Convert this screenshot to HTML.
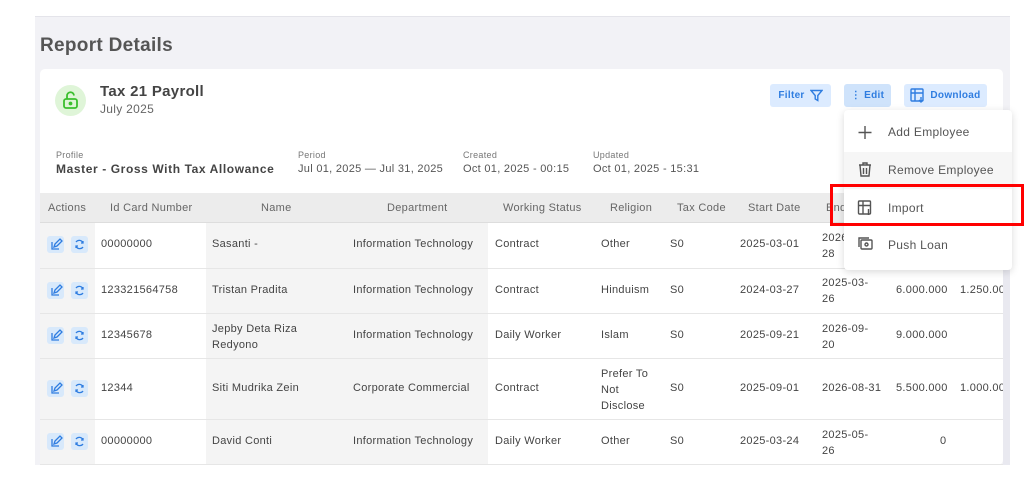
<!DOCTYPE html>
<html><head><meta charset="utf-8"><style>
*{box-sizing:border-box;margin:0;padding:0}
body{width:1035px;height:487px;background:#fff;font-family:"Liberation Sans",sans-serif;color:#444;position:relative;overflow:hidden;letter-spacing:0.3px}
.a{position:absolute;white-space:nowrap}
.bg{left:35px;top:16px;width:975px;height:449px;background:#f2f2f6;border-top:1px solid #e4e4ea}
.card{left:40px;top:69px;width:963px;height:396px;background:#fff;border-radius:5px}
.t{font-size:11px;color:#444}
.h{font-size:11px;color:#666}
.btn{background:#dcebff;border-radius:3px;color:#2f7de0;font-size:10px;font-weight:bold;height:23px;top:84px;display:flex;align-items:center;justify-content:center;gap:5px}
.ib{width:17px;height:17px;background:#d8e9fb;border-radius:3px;position:absolute;left:0;top:0}
.line{position:absolute;left:40px;width:963px;height:1px;background:#e6e6e6}
</style></head><body>
<div class="a bg"></div>
<div class="a" style="left:40px;top:35px;font-size:19px;font-weight:bold;color:#555">Report Details</div>
<div class="a card"></div>
<div class="a" style="left:55px;top:85px;width:31px;height:31px;border-radius:50%;background:#dff5d8"></div>
<svg class="a" style="left:62px;top:91px" width="17" height="19" viewBox="0 0 17 19" fill="none" stroke="#3bbf2e" stroke-width="1.8"><rect x="2" y="8" width="13" height="9" rx="2"/><path d="M5 8V5a3.5 3.5 0 0 1 7-0.5"/><circle cx="8.5" cy="12.5" r="1" fill="#3bbf2e"/></svg>
<div class="a" style="left:100px;top:83px;font-size:15px;font-weight:bold;color:#444">Tax 21 Payroll</div>
<div class="a" style="left:100px;top:102px;font-size:12px;color:#666">July 2025</div>
<div class="a" style="left:56px;top:150px;font-size:9px;color:#777">Profile</div>
<div class="a" style="left:56px;top:162px;font-size:12px;font-weight:bold;color:#444;letter-spacing:0.6px">Master - Gross With Tax Allowance</div>
<div class="a" style="left:298px;top:150px;font-size:9px;color:#777">Period</div>
<div class="a" style="left:298px;top:163px;font-size:11px;color:#555">Jul 01, 2025 — Jul 31, 2025</div>
<div class="a" style="left:463px;top:150px;font-size:9px;color:#777">Created</div>
<div class="a" style="left:463px;top:163px;font-size:11px;color:#555">Oct 01, 2025 - 00:15</div>
<div class="a" style="left:593px;top:150px;font-size:9px;color:#777">Updated</div>
<div class="a" style="left:593px;top:163px;font-size:11px;color:#555">Oct 01, 2025 - 15:31</div>
<div class="a btn" style="left:770px;width:61px">Filter <svg width="13" height="13" viewBox="0 0 13 13" fill="none" stroke="#2f7de0" stroke-width="1.4"><path d="M1 1.5h11L7.8 6.5v5L5.2 10V6.5z"/></svg></div>
<div class="a btn" style="left:844px;width:47px;background:#cfe3fb">⋮ Edit</div>
<div class="a btn" style="left:904px;width:83px"><svg width="15" height="15" viewBox="0 0 15 15" fill="none" stroke="#2f7de0" stroke-width="1.4"><rect x="1" y="1" width="12" height="12" rx="1"/><path d="M1 5h12M5 1v12"/><path d="M11 9v5M9 12l2 2 2-2"/></svg>Download</div>
<div class="a" style="left:40px;top:193px;width:963px;height:30px;background:#ececec"></div>
<div class="a" style="left:40px;top:223px;width:55px;height:241px;background:#f4f4f4"></div>
<div class="a" style="left:206px;top:223px;width:282px;height:241px;background:#f4f4f4"></div>
<div class="line" style="top:222px;background:#ddd"></div>
<div class="line" style="top:268px"></div><div class="line" style="top:313px"></div><div class="line" style="top:358px"></div><div class="line" style="top:419px"></div><div class="line" style="top:464px"></div>
<div class="a h" style="left:48px;top:202px">Actions</div>
<div class="a h" style="left:110px;top:202px">Id Card Number</div>
<div class="a h" style="left:261px;top:202px">Name</div>
<div class="a h" style="left:387px;top:202px">Department</div>
<div class="a h" style="left:503px;top:202px">Working Status</div>
<div class="a h" style="left:610px;top:202px">Religion</div>
<div class="a h" style="left:677px;top:202px">Tax Code</div>
<div class="a h" style="left:748px;top:202px">Start Date</div>
<div class="a h" style="left:826px;top:202px">End</div>
<div class="a t" style="left:101px;top:238px">00000000</div><div class="a t" style="left:212px;top:238px">Sasanti -</div><div class="a t" style="left:353px;top:238px">Information Technology</div><div class="a t" style="left:495px;top:238px">Contract</div><div class="a t" style="left:601px;top:238px">Other</div><div class="a t" style="left:670px;top:238px">S0</div><div class="a t" style="left:740px;top:238px">2025-03-01</div><div class="a t" style="left:822px;top:230px;line-height:16px">2026<br>28</div>
<div class="a t" style="left:101px;top:284px">123321564758</div><div class="a t" style="left:212px;top:284px">Tristan Pradita</div><div class="a t" style="left:353px;top:284px">Information Technology</div><div class="a t" style="left:495px;top:284px">Contract</div><div class="a t" style="left:601px;top:284px">Hinduism</div><div class="a t" style="left:670px;top:284px">S0</div><div class="a t" style="left:740px;top:284px">2024-03-27</div><div class="a t" style="left:822px;top:275px;line-height:16px">2025-03-<br>26</div><div class="a t" style="left:896px;top:284px">6.000.000</div><div class="a t" style="left:960px;top:284px">1.250.00</div>
<div class="a t" style="left:101px;top:329px">12345678</div><div class="a t" style="left:212px;top:321px;line-height:16px">Jepby Deta Riza<br>Redyono</div><div class="a t" style="left:353px;top:329px">Information Technology</div><div class="a t" style="left:495px;top:329px">Daily Worker</div><div class="a t" style="left:601px;top:329px">Islam</div><div class="a t" style="left:670px;top:329px">S0</div><div class="a t" style="left:740px;top:329px">2025-09-21</div><div class="a t" style="left:822px;top:321px;line-height:16px">2026-09-<br>20</div><div class="a t" style="left:896px;top:329px">9.000.000</div>
<div class="a t" style="left:101px;top:382px">12344</div><div class="a t" style="left:212px;top:382px">Siti Mudrika Zein</div><div class="a t" style="left:353px;top:382px">Corporate Commercial</div><div class="a t" style="left:495px;top:382px">Contract</div><div class="a t" style="left:601px;top:366px;line-height:16px">Prefer To<br>Not<br>Disclose</div><div class="a t" style="left:670px;top:382px">S0</div><div class="a t" style="left:740px;top:382px">2025-09-01</div><div class="a t" style="left:822px;top:382px">2026-08-31</div><div class="a t" style="left:896px;top:382px">5.500.000</div><div class="a t" style="left:960px;top:382px">1.000.00</div>
<div class="a t" style="left:940px;top:435px">0</div><div class="a t" style="left:101px;top:435px">00000000</div><div class="a t" style="left:212px;top:435px">David Conti</div><div class="a t" style="left:353px;top:435px">Information Technology</div><div class="a t" style="left:495px;top:435px">Daily Worker</div><div class="a t" style="left:601px;top:435px">Other</div><div class="a t" style="left:670px;top:435px">S0</div><div class="a t" style="left:740px;top:435px">2025-03-24</div><div class="a t" style="left:822px;top:427px;line-height:16px">2025-05-<br>26</div>
<div class="a" style="left:1003px;top:193px;width:7px;height:272px;background:#e9e9f0"></div>
<div class="a" style="left:47px;top:236px"><div class="ib"></div><div class="ib" style="left:24px"></div></div>
<div class="a" style="left:47px;top:282px"><div class="ib"></div><div class="ib" style="left:24px"></div></div>
<div class="a" style="left:47px;top:327px"><div class="ib"></div><div class="ib" style="left:24px"></div></div>
<div class="a" style="left:47px;top:380px"><div class="ib"></div><div class="ib" style="left:24px"></div></div>
<div class="a" style="left:47px;top:433px"><div class="ib"></div><div class="ib" style="left:24px"></div></div>
<svg class="a" style="left:47px;top:236px" width="41" height="215" fill="none" stroke="#2f7de0" stroke-width="1.3">
<g id="ic"><path d="M5 6v7h7M7 11l1-3 5-5 2 2-5 5z"/><path d="M29 6a4 4 0 0 1 7 1M36 11a4 4 0 0 1-7-1M36 5v2h-2M29 12v-2h2"/></g>
<use href="#ic" y="46"/><use href="#ic" y="91"/><use href="#ic" y="144"/><use href="#ic" y="197"/>
</svg>
<div class="a" style="left:844px;top:110px;width:168px;height:160px;background:#fff;border-radius:4px;box-shadow:0 2px 8px rgba(0,0,0,.15)"></div>
<div class="a" style="left:844px;top:152px;width:168px;height:37px;background:#f6f6f6"></div>
<svg class="a" style="left:857px;top:124px" width="16" height="140" fill="none" stroke="#555" stroke-width="1.4">
<path d="M8 2v13M1.5 8.5h13"/>
<path d="M2 41h12M6 41v-2h4v2M3 41l1 11h8l1-11M6.5 44v6M9.5 44v6"/>
<rect x="1.5" y="77" width="12" height="13" rx="1"/><path d="M1.5 81.5h12M6 77v13M11.5 85v6"/>
<rect x="4" y="116" width="11" height="9" rx="1"/><path d="M2 123v-9h10"/><circle cx="9.5" cy="120.5" r="1.5"/>
</svg>
<div class="a" style="left:888px;top:125px;font-size:12px;color:#555">Add Employee</div>
<div class="a" style="left:888px;top:163px;font-size:12px;color:#555">Remove Employee</div>
<div class="a" style="left:888px;top:201px;font-size:12px;color:#555">Import</div>
<div class="a" style="left:888px;top:238px;font-size:12px;color:#555">Push Loan</div>
<div class="a" style="left:830px;top:184px;width:194px;height:42px;border:3px solid #f00"></div>
</body></html>
